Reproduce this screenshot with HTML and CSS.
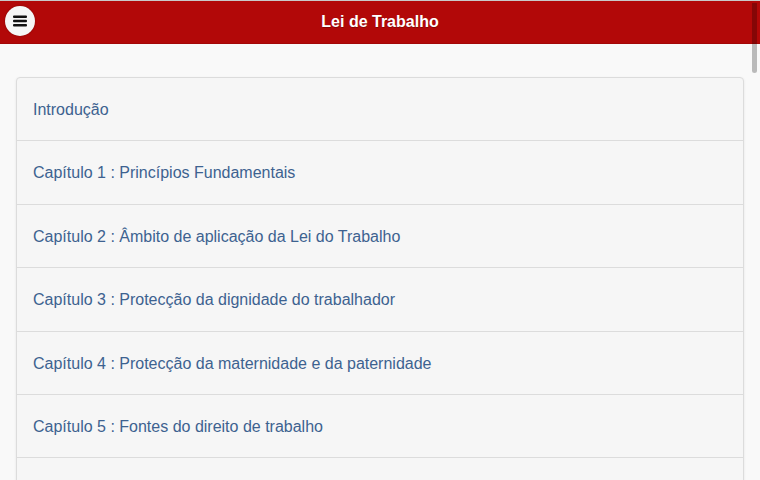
FILE: index.html
```html
<!DOCTYPE html>
<html lang="pt">
<head>
    <meta charset="UTF-8">
    <meta name="viewport" content="width=device-width, initial-scale=1.0">
    <title>Lei de Trabalho</title>
    <link rel="stylesheet" href="styles.css">
</head>
<body>
<header class="top-bar">
	<span class="menu-btn">
		<svg width="16" height="12" viewBox="0 0 16 12">
			<rect x="1" y="0.5" width="14" height="2.4" rx="1"/>
			<rect x="1" y="4.8" width="14" height="2.4" rx="1"/>
			<rect x="1" y="9.1" width="14" height="2.4" rx="1"/>
		</svg>
	</span>
	<h1 class="top-title">Lei de Trabalho</h1>
</header>
<div class="page">
	<ul class="chapter-list">
		<li class="chapter-item">Introdução</li>
		<li class="chapter-item">Capítulo 1 : Princípios Fundamentais</li>
		<li class="chapter-item">Capítulo 2 : Âmbito de aplicação da Lei do Trabalho</li>
		<li class="chapter-item">Capítulo 3 : Protecção da dignidade do trabalhador</li>
		<li class="chapter-item">Capítulo 4 : Protecção da maternidade e da paternidade</li>
		<li class="chapter-item">Capítulo 5 : Fontes do direito de trabalho</li>
		<li class="chapter-item"></li>
	</ul>
</div>
<span class="scroll-thumb"></span>
</body>
</html>
```
FILE: styles.css
```css
*{
	padding:0;margin:0;box-sizing:border-box;
}
html,body{height:100%;overflow:hidden;}
body{font-family:"Liberation Sans",Arial,sans-serif;font-size:16px;background:#f9f9f9;border-top:1px solid #c9c9c9;}
ol,ul{list-style:none}

.top-bar{
	height:43px;
	background:#b20808;
	display:flex;
	align-items:center;
	justify-content:center;
	position:relative;
	border-bottom:1px solid #a30707;
}
.menu-btn{
	position:absolute;left:5px;top:5px;
	width:30px;height:30px;
	border-radius:50%;
	background:#f6f6f6;
	display:flex;align-items:center;justify-content:center;
	box-shadow:0 0 2px rgba(0,0,0,0.3);
}
.menu-btn svg{fill:#111;}
.top-title{
	font-size:16px;
	font-weight:700;
	color:#fff;
	text-shadow:0 1px 0 rgba(0,0,0,0.25);
}

.page{
	padding:33px 16px 0 16px;
}
.chapter-list{
	background:#f6f6f6;
	border:1px solid #dcdcdc;
	border-radius:4px;
	box-shadow:0 1px 3px rgba(0,0,0,0.08);
}
.chapter-item{
	height:63.4px;
	line-height:63px;
	padding:0 16px;
	color:#3d6290;
	border-bottom:1px solid #dcdcdc;
	white-space:nowrap;
}
.scroll-thumb{
	position:absolute;
	right:3px;top:3px;
	width:5px;height:70px;
	border-radius:0 0 3px 3px;
	background:rgba(0,0,0,0.25);
}
```
